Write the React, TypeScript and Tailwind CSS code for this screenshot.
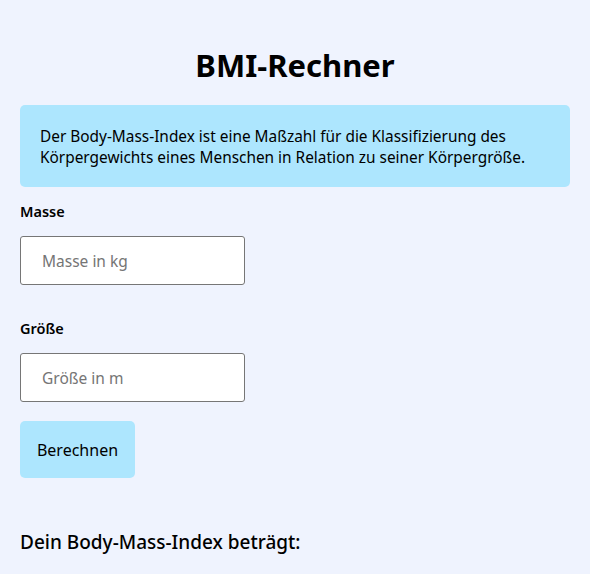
export default function App() {
  return (
    <div className="min-h-screen bg-[#eff3fe] px-5 text-black" style={{ fontFamily: '"Noto Sans", "Open Sans", sans-serif' }}>
      <h1 className="pt-[41px] text-center text-[31px] font-bold leading-[48px]">BMI-Rechner</h1>
      <div className="mt-4 rounded-[5px] bg-[#ade6fe] px-5 pb-[19px] pt-[21px] text-[15.4px] leading-[21px]">
        Der Body-Mass-Index ist eine Maßzahl für die Klassifizierung des Körpergewichts eines Menschen in Relation zu seiner Körpergröße.
      </div>
      <label className="mt-[14px] block text-[14.5px] font-semibold leading-[21px]">Masse</label>
      <input
        className="mt-[14px] block h-[49px] w-[225px] rounded-[3px] border border-[#767676] bg-white px-[21px] text-[15.5px] placeholder:text-[#757575] outline-none"
        placeholder="Masse in kg"
      />
      <label className="mt-[33px] block text-[14.5px] font-semibold leading-[21px]">Größe</label>
      <input
        className="mt-[14px] block h-[49px] w-[225px] rounded-[3px] border border-[#767676] bg-white px-[21px] text-[15.5px] placeholder:text-[#757575] outline-none"
        placeholder="Größe in m"
      />
      <button className="mt-[19px] block h-[57px] w-[115px] rounded-[5px] bg-[#ade6fe] text-[16px]">Berechnen</button>
      <h2 className="mt-[51px] text-[19px] font-medium leading-[27px]">Dein Body-Mass-Index beträgt:</h2>
    </div>
  );
}
